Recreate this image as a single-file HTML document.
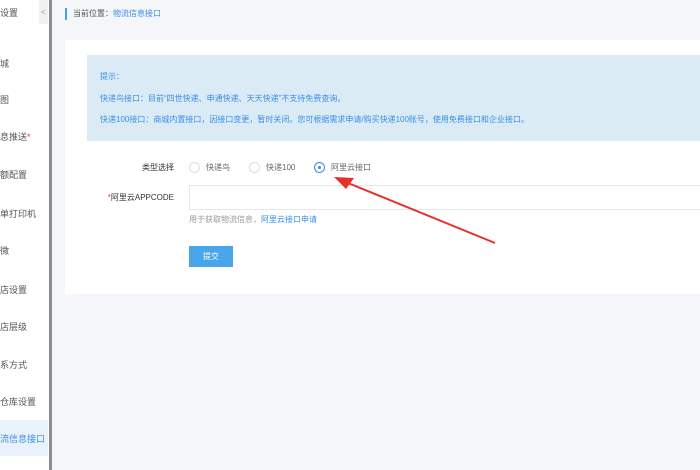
<!DOCTYPE html>
<html><head><meta charset="utf-8"><style>
*{margin:0;padding:0;box-sizing:border-box}
body{width:700px;height:470px;overflow:hidden;background:#f4f6f9;font-family:"Liberation Sans","Noto Sans CJK SC",sans-serif;position:relative;font-size:9px;color:#333}
.sb{position:absolute;left:0;top:0;width:49px;height:470px;background:#fff}
.div{position:absolute;left:49px;top:0;width:3px;height:470px;background:#8a8d91}
.sb div{position:absolute;left:0;font-size:9px;color:#555;white-space:nowrap}
.tab{position:absolute;left:39px;top:0;width:9px;height:24px;background:#f0f1f3;color:#aaa;font-size:9px;text-align:center;line-height:24px}
.sel{position:absolute;left:0;top:420px;width:48px;height:36px;background:#e9f2fb}
.a{position:absolute;white-space:nowrap}
</style></head><body>
<div class="sb">
<div style="top:6px">设置</div>
<div style="top:57px">城</div>
<div style="top:93px">图</div>
<div style="top:130px">息推送<span style="color:#e33">*</span></div>
<div style="top:168px">额配置</div>
<div style="top:207px">单打印机</div>
<div style="top:244px">微</div>
<div style="top:283px">店设置</div>
<div style="top:320px">店层级</div>
<div style="top:358px">系方式</div>
<div style="top:395px">仓库设置</div>
<div class="sel"></div>
<div style="top:432px;color:#3a8ee6">流信息接口</div>
</div>
<div class="tab">&lt;</div>
<div class="div"></div>
<div class="a" style="left:65px;top:8px;width:2px;height:12px;background:#4a9be8"></div>
<div class="a" style="left:73px;top:8px;font-size:8px;color:#555">当前位置：<span style="color:#3a8ee6">物流信息接口</span></div>
<div class="a" style="left:65px;top:40px;width:635px;height:254px;background:#fff"></div>
<div class="a" style="left:87px;top:55px;width:613px;height:86px;background:#dbebf6"></div>
<div class="a" style="left:100px;top:71px;font-size:8px;color:#3a8ee6">提示：</div>
<div class="a" style="left:100px;top:93px;font-size:8px;color:#3a8ee6">快递鸟接口：目前“四世快递、申通快递、天天快递”不支持免费查询。</div>
<div class="a" style="left:100px;top:114px;font-size:8px;color:#3a8ee6">快递100接口：商城内置接口，因接口变更，暂时关闭。您可根据需求申请/购买快递100账号，使用免费接口和企业接口。</div>
<div class="a" style="left:74px;width:100px;text-align:right;top:162px;font-size:8px;color:#333">类型选择</div>
<div class="a" style="left:189px;top:162px;width:11px;height:11px;border:1px solid #ddd;border-radius:50%"></div>
<div class="a" style="left:206px;top:162px;font-size:8px;color:#666">快递鸟</div>
<div class="a" style="left:249px;top:162px;width:11px;height:11px;border:1px solid #ddd;border-radius:50%"></div>
<div class="a" style="left:266px;top:162px;font-size:8px;color:#666">快递100</div>
<div class="a" style="left:314px;top:162px;width:11px;height:11px;border:1px solid #3a8ee6;border-radius:50%"><div style="position:absolute;left:3px;top:3px;width:3px;height:3px;border-radius:50%;background:#3a8ee6"></div></div>
<div class="a" style="left:331px;top:162px;font-size:8px;color:#666">阿里云接口</div>
<div class="a" style="left:74px;width:100px;text-align:right;top:192px;font-size:8px;color:#333"><span style="color:#e33">*</span>阿里云APPCODE</div>
<div class="a" style="left:189px;top:185px;width:511px;height:25px;border:1px solid #e6e6e6;border-right:none"></div>
<div class="a" style="left:189px;top:214px;font-size:8px;color:#999">用于获取物流信息，<span style="color:#3a8ee6">阿里云接口申请</span></div>
<div class="a" style="left:189px;top:246px;width:44px;height:21px;background:#4aa6ea;color:#fff;font-size:8px;text-align:center;line-height:21px">提交</div>
<svg class="a" style="left:0;top:0" width="700" height="470"><path d="M495 243 L348 183" stroke="#e8302a" stroke-width="2"/><polygon points="334,177 354,178 346,189" fill="#e8302a"/></svg>
</body></html>
